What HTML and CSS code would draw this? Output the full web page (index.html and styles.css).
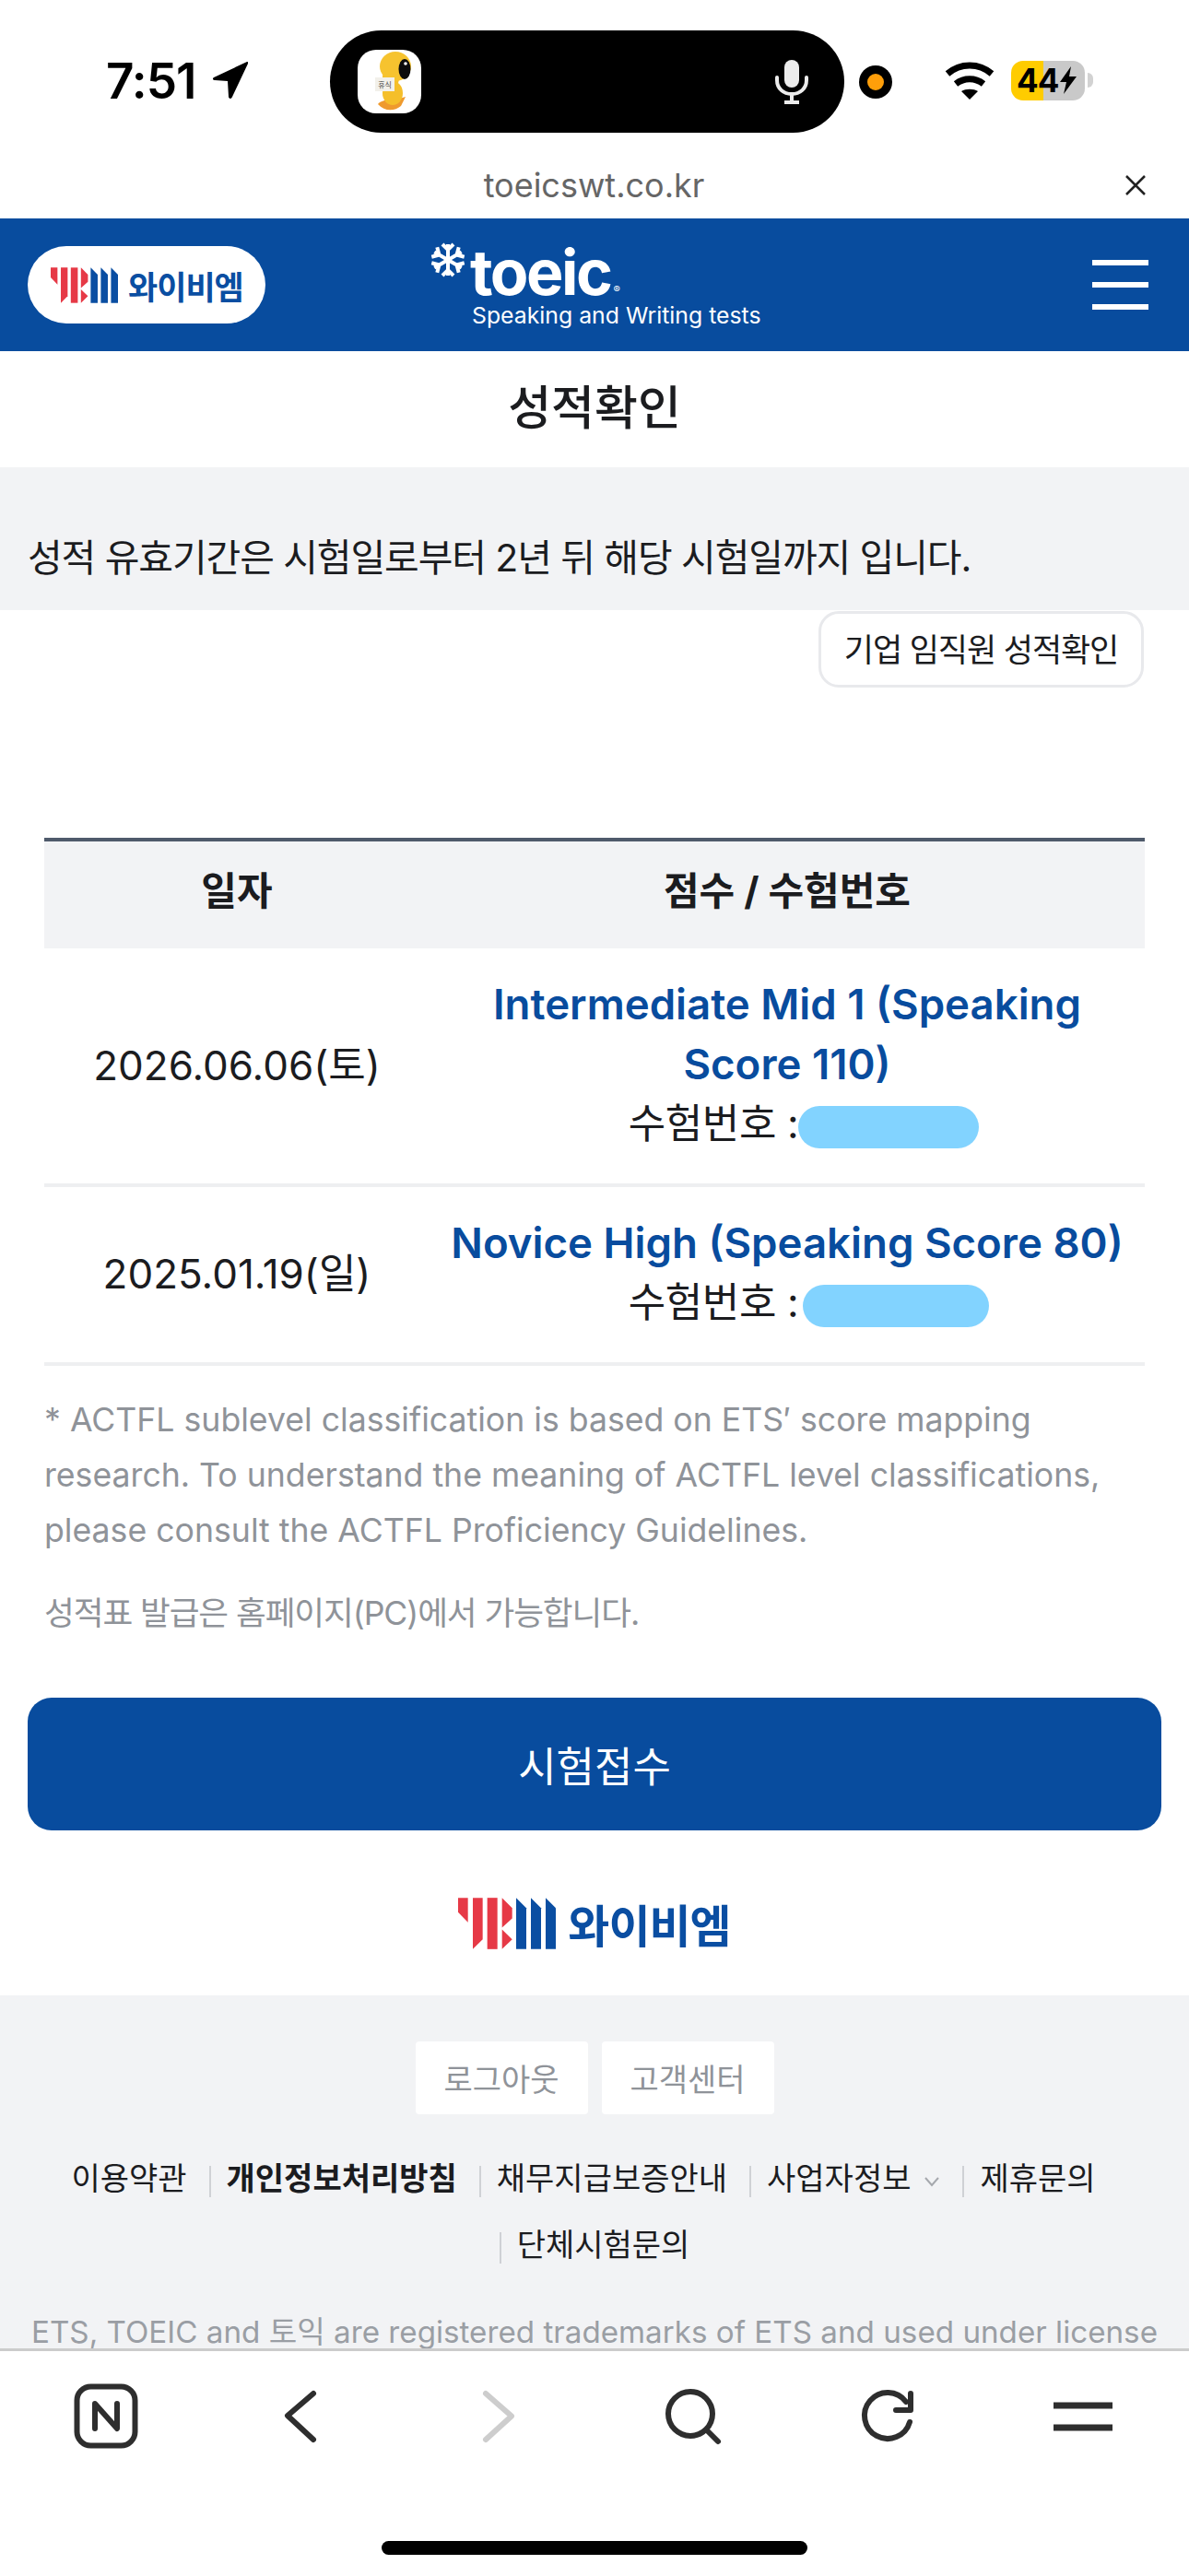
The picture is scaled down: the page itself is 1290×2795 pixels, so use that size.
FILE: index.html
```html
<!DOCTYPE html>
<html lang="ko">
<head>
  <meta charset="UTF-8">
  <title>성적확인</title>
  <link rel="stylesheet" href="styles.css">
</head>
<body>

<svg class="defs" width="0" height="0">
  <symbol id="ybm-mark" viewBox="20 25 318 167">
    <g fill="#e63946">
      <polygon points="20,25 52,25 52,105 20,72"/>
      <polygon points="68,25 100,25 100,160 68,192"/>
      <polygon points="115,25 148,25 148,192 115,192"/>
      <polygon points="163,25 196,58 196,92 163,122"/>
      <polygon points="163,128 196,160 163,192"/>
    </g>
    <g fill="#0a4ea2">
      <polygon points="209,25 242,58 242,192 209,192"/>
      <polygon points="257,25 290,58 290,192 257,192"/>
      <polygon points="305,25 338,58 338,192 305,192"/>
    </g>
  </symbol>
  <symbol id="star-arm" viewBox="0 0 38 38">
    <path d="M19 19V2M13 2l6 6 6-6" fill="none" stroke="#fff" stroke-width="4"/>
  </symbol>
</svg>

<div class="phone">

  <div class="status">
    <div class="time">7:51</div>
    <svg class="loc" width="40" height="42" viewBox="0 0 40 42">
      <path d="M38 1 2 18c-2 1-1 3 1 3l14 1 1 17c0 2 3 3 4 0L39 3c0-2-0-2-1-2z" fill="#000"/>
    </svg>
    <div class="island">
      <svg class="duck" width="69" height="69" viewBox="0 0 69 69">
        <rect width="69" height="69" rx="20" fill="#fff"/>
        <path d="M22 59c3-4 12-6 20-5l10-3-5 10c-7 6-18 6-25-2z" fill="#ef9a2e"/>
        <ellipse cx="38" cy="47" rx="11" ry="13" fill="#f5bf2a"/>
        <ellipse cx="36" cy="30" rx="9" ry="14" fill="#f5bf2a"/>
        <ellipse cx="41" cy="18" rx="17" ry="16" fill="#f6c32f"/>
        <ellipse cx="51" cy="21" rx="6.500" ry="11" fill="#0c0c0c"/>
        <circle cx="52" cy="15" r="1.800" fill="#fff"/>
        <rect x="19" y="30" width="21" height="15" fill="#f2f0ea"/>
        <text class="duck-sign" x="29.500" y="41">휴식</text>
      </svg>
      <svg class="mic" width="38" height="48" viewBox="0 0 38 48">
        <rect x="11" y="0" width="16" height="30" rx="8" fill="#ececec"/>
        <path d="M3 19v3c0 9 7 15 16 15s16-6 16-15v-3" fill="none" stroke="#ececec" stroke-width="4" stroke-linecap="round"/>
        <path d="M19 37v8M11 46h16" stroke="#ececec" stroke-width="4"/>
      </svg>
    </div>
    <div class="rec"><span class="rec-in"></span></div>
    <svg class="wifi" width="60" height="48" viewBox="0 0 60 48">
      <path d="M6 17c14-12 34-12 48 0" fill="none" stroke="#000" stroke-width="7"/>
      <path d="M15 28c9-7 21-7 30 0" fill="none" stroke="#000" stroke-width="7"/>
      <path d="M21 36c5-3 13-3 18 0l-9 9z" fill="#000"/>
    </svg>
    <div class="batt">
      <span class="batt-num">44</span>
      <svg width="20" height="30" viewBox="0 0 20 30"><path d="M13 0 1 17h7l-3 13L19 11h-8z" fill="#000"/></svg>
    </div>
    <div class="batt-cap"></div>
  </div>

  <div class="addr">
    <span class="addr-url">toeicswt.co.kr</span>
    <svg class="addr-x" width="26" height="26" viewBox="0 0 26 26">
      <path d="M3 3l20 20M23 3 3 23" stroke="#222" stroke-width="2.500"/>
    </svg>
  </div>

  <div class="web">
    <header class="top">
      <a class="pill">
        <svg width="73" height="39"><use href="#ybm-mark"/></svg>
        <span class="pill-txt">와이비엠</span>
      </a>
      <div class="brand">
        <div class="brand-top">
          <svg class="star" width="38" height="38" viewBox="0 0 38 38">
            <use href="#star-arm" width="38" height="38"/>
            <use href="#star-arm" width="38" height="38" transform="rotate(60 19 19)"/>
            <use href="#star-arm" width="38" height="38" transform="rotate(120 19 19)"/>
            <use href="#star-arm" width="38" height="38" transform="rotate(180 19 19)"/>
            <use href="#star-arm" width="38" height="38" transform="rotate(240 19 19)"/>
            <use href="#star-arm" width="38" height="38" transform="rotate(300 19 19)"/>
          </svg>
          <span class="brand-name">toeic</span>
          <span class="brand-r">®</span>
        </div>
        <div class="brand-sub">Speaking and Writing tests</div>
      </div>
      <div class="burger"><span></span><span></span><span></span></div>
    </header>

    <h1 class="page-title">성적확인</h1>

    <div class="notice">성적 유효기간은 시험일로부터 2년 뒤 해당 시험일까지 입니다.</div>

    <div class="corp-row"><a class="corp-btn">기업 임직원 성적확인</a></div>

    <table class="scores">
      <thead>
        <tr><th class="col-date">일자</th><th>점수 / 수험번호</th></tr>
      </thead>
      <tbody>
        <tr class="row-a">
          <td class="date">2026.06.06(토)</td>
          <td class="score">
            <strong>Intermediate Mid 1 (Speaking Score 110)</strong>
            <div class="num">수험번호 :<span class="mask mask-a"></span></div>
          </td>
        </tr>
        <tr class="row-b">
          <td class="date">2025.01.19(일)</td>
          <td class="score">
            <strong>Novice High (Speaking Score 80)</strong>
            <div class="num">수험번호 :<span class="mask mask-b"></span></div>
          </td>
        </tr>
      </tbody>
    </table>

    <div class="notes">
      <p>* ACTFL sublevel classification is based on ETS′ score mapping research. To understand the meaning of ACTFL level classifications, please consult the ACTFL Proficiency Guidelines.</p>
      <p class="notes-ko">성적표 발급은 홈페이지(PC)에서 가능합니다.</p>
    </div>

    <a class="apply">시험접수</a>

    <div class="ybm">
      <svg width="106" height="56"><use href="#ybm-mark"/></svg>
      <span class="ybm-txt">와이비엠</span>
    </div>

    <footer class="foot">
      <div class="foot-btns">
        <a class="foot-btn">로그아웃</a>
        <a class="foot-btn">고객센터</a>
      </div>
      <ul class="foot-links">
        <li>이용약관</li>
        <li class="sep"><b>개인정보처리방침</b></li>
        <li class="sep">채무지급보증안내</li>
        <li class="sep">사업자정보<svg class="chev" width="18" height="12" viewBox="0 0 18 12"><path d="M2 2l7 8 7-8" fill="none" stroke="#a5a8ad" stroke-width="2"/></svg></li>
        <li class="sep">제휴문의</li>
        <li class="sep sep-wrap">단체시험문의</li>
      </ul>
      <p class="legal">ETS, TOEIC and 토익 are registered trademarks of ETS and used under license</p>
    </footer>
  </div>

  <nav class="toolbar">
    <div class="tools">
      <svg width="80" height="80" viewBox="0 0 80 80">
        <rect x="8.500" y="7.500" width="63" height="64" rx="15" class="ic"/>
        <path d="M28 53V26l24 27V26" class="ic"/>
      </svg>
      <svg width="80" height="80" viewBox="0 0 80 80"><path d="M53 15 25 39l28 26" class="ic"/></svg>
      <svg width="80" height="80" viewBox="0 0 80 80"><path d="M28 15l28 24.500L28 65" class="ic ic-off"/></svg>
      <svg width="80" height="80" viewBox="0 0 80 80">
        <circle cx="38" cy="37" r="24" class="ic"/>
        <path d="M56 55l12 12" class="ic"/>
      </svg>
      <svg width="80" height="80" viewBox="0 0 80 80">
        <path d="M64 46A25 25 0 1 1 60 24" class="ic"/>
        <path d="M65 15v18H49" class="ic"/>
      </svg>
      <svg width="80" height="80" viewBox="0 0 80 80"><path d="M8 28h64M8 52h64" class="ic ic-bar"/></svg>
    </div>
    <div class="home"></div>
  </nav>

</div>

</body>
</html>
```

FILE: styles.css
```css
* { box-sizing: border-box; }
html, body { margin: 0; padding: 0; background: #fff; }
body {
  font-family: Inter, "Noto Sans CJK KR", sans-serif;
  color: #1b1c1f;
}
a { display: block; }
.defs { display: block; height: 0; }

.phone {
  width: 1290px;
  height: 2795px;
  display: flex;
  flex-direction: column;
  overflow: hidden;
}

/* status bar */
.status {
  height: 177px;
  flex: none;
  display: flex;
  align-items: center;
  padding-left: 115px;
}
.time {
  width: 100px;
  font-size: 53px;
  font-weight: 600;
  letter-spacing: -1px;
  color: #000;
  margin-top: -2px;
}
.loc { margin-left: 15px; margin-top: -4px; }
.island {
  width: 558px;
  height: 111px;
  margin-left: 88px;
  background: #000;
  border-radius: 56px;
  display: flex;
  align-items: center;
  justify-content: space-between;
  padding: 0 38px 0 30px;
}
.duck-sign {
  font-size: 8px;
  text-anchor: middle;
  fill: #444;
}
.rec {
  width: 36px;
  height: 36px;
  margin-left: 16px;
  border-radius: 50%;
  background: #000;
  display: flex;
  align-items: center;
  justify-content: center;
}
.rec-in { width: 18px; height: 18px; border-radius: 50%; background: #ff9f0a; }
.wifi { margin-left: 54px; margin-top: -3px; }
.batt {
  width: 80px;
  height: 43px;
  margin-left: 15px;
  margin-top: -3px;
  border-radius: 13px;
  background: linear-gradient(90deg, #ffcc00 44%, #c9c9c9 44%);
  display: flex;
  align-items: center;
  gap: 1px;
  padding-left: 6px;
}
.batt-num { font-size: 35px; font-weight: 700; color: #000; letter-spacing: -1px; }
.batt-cap {
  width: 6px;
  height: 16px;
  margin-left: 3px;
  margin-top: -3px;
  background: #d2d2d2;
  border-radius: 0 8px 8px 0;
}

/* address */
.addr {
  height: 60px;
  flex: none;
  display: flex;
  align-items: center;
  justify-content: center;
  padding-bottom: 12px;
}
.addr-url { font-size: 36px; color: #666; }
.addr-x { margin-left: 455px; margin-right: -480px; width: 26px; }

/* web page */
.web { flex: 1; min-height: 0; overflow: hidden; }

.top {
  height: 144px;
  background: #084c9e;
  display: flex;
  align-items: center;
  padding: 0 44px 0 30px;
}
.pill {
  width: 258px;
  height: 84px;
  background: #fff;
  border-radius: 42px;
  display: flex;
  align-items: center;
  gap: 11px;
  padding-left: 25px;
}
.pill-txt {
  font-size: 35px;
  font-weight: 700;
  color: #0a4ea2;
  letter-spacing: -1px;
  white-space: nowrap;
}
.brand { margin-left: 179px; color: #fff; align-self: flex-start; }
.brand-top { display: flex; align-items: flex-start; height: 90px; }
.star { margin-top: 26px; }
.brand-name {
  font-size: 68px;
  font-weight: 700;
  letter-spacing: -2.500px;
  line-height: 60px;
  margin-top: 28px;
  margin-left: 5px;
}
.brand-r { font-size: 11px; margin-top: 70px; margin-left: 3px; }
.brand-sub {
  font-size: 24.800px;
  margin-left: 45px;
  line-height: 30px;
  white-space: nowrap;
}
.burger { margin-left: auto; width: 61px; display: flex; flex-direction: column; gap: 18px; }
.burger span { height: 6px; background: #fff; }

.page-title {
  height: 126px;
  margin: 0;
  display: flex;
  align-items: center;
  justify-content: center;
  font-size: 51px;
  font-weight: 500;
  padding-bottom: 10px;
}

.notice {
  height: 155px;
  background: #f2f3f5;
  padding: 68px 30px 0;
  font-size: 41px;
  letter-spacing: -1.100px;
  line-height: 60px;
  white-space: nowrap;
}

.corp-row { display: flex; justify-content: flex-end; padding-right: 49px; margin-top: 1px; }
.corp-btn {
  width: 353px;
  height: 83px;
  border: 3px solid #e8e9ec;
  border-radius: 22px;
  display: flex;
  align-items: center;
  justify-content: center;
  font-size: 35px;
  letter-spacing: -1.100px;
  padding-bottom: 4px;
  white-space: nowrap;
}

/* table */
.scores {
  width: 1194px;
  margin: 163px 0 0 48px;
  border-collapse: collapse;
  table-layout: fixed;
  text-align: center;
}
.scores th {
  height: 118px;
  background: #f2f3f5;
  border-top: 4px solid #4f5a6b;
  font-size: 42px;
  font-weight: 700;
  padding: 0 0 15px;
}
.col-date { width: 418px; }
.scores td {
  border-bottom: 4px solid #eeeff1;
  font-size: 44px;
  padding: 0;
}
.row-a td { height: 257px; }
.row-b td { height: 194px; }
.scores .date { padding-bottom: 8px; }
.scores .score { padding: 0 20px 4px; line-height: 65px; }
.score strong { display: block; font-size: 45.600px; font-weight: 600; color: #084c9e; }
.num { white-space: nowrap; letter-spacing: -0.400px; }
.mask {
  display: inline-block;
  height: 46px;
  background: #82d3ff;
  border-radius: 23px;
  vertical-align: middle;
}
.mask-a { width: 196px; margin-right: -36px; }
.mask-b { width: 202px; margin-left: 5px; margin-right: -47px; }

/* notes */
.notes { padding: 28px 48px 0; color: #8f9399; font-size: 35.650px; line-height: 60px; }
.notes p { margin: 0; }
.notes .notes-ko { margin-top: 30px; letter-spacing: -1.100px; }

.apply {
  height: 144px;
  margin: 62px 30px 0;
  background: #084c9e;
  border-radius: 26px;
  color: #fff;
  font-size: 45px;
  display: flex;
  align-items: center;
  justify-content: center;
}

.ybm {
  height: 179px;
  padding-top: 22px;
  display: flex;
  align-items: center;
  justify-content: center;
  gap: 13px;
}
.ybm-txt { font-size: 49px; font-weight: 700; color: #0a4ea2; letter-spacing: -1px; }

/* footer */
.foot { background: #f2f3f5; padding-top: 50px; height: 400px; text-align: center; }
.foot-btns { display: flex; justify-content: center; gap: 15px; }
.foot-btn {
  width: 187px;
  height: 79px;
  background: #fff;
  border-radius: 4px;
  color: #8f9399;
  font-size: 34px;
  display: flex;
  align-items: center;
  justify-content: center;
}
.foot-links {
  list-style: none;
  margin: 34px 0 0;
  padding: 0 50px;
  display: flex;
  flex-wrap: wrap;
  justify-content: center;
  font-size: 34px;
  line-height: 72px;
}
.foot-links li { white-space: nowrap; margin-right: 24px; }
.sep::before {
  content: "";
  display: inline-block;
  width: 2px;
  height: 34px;
  background: #cfd1d5;
  margin: 0 17px 0 0;
  vertical-align: middle;
}
.foot-links .sep-wrap { margin-left: 24px; }
.chev { margin-left: 14px; vertical-align: middle; }
.legal {
  margin: 36px 0 0;
  font-size: 33.200px;
  line-height: 44px;
  color: #9a9ea4;
  white-space: nowrap;
}

/* app toolbar */
.toolbar { height: 247px; flex: none; background: #fff; border-top: 3px solid #ccc; }
.tools {
  display: grid;
  grid-template-columns: repeat(6, 212px);
  padding: 31px 0 0 9px;
  justify-items: center;
}
.ic {
  fill: none;
  stroke: #2e2e2e;
  stroke-width: 6;
  stroke-linecap: round;
  stroke-linejoin: round;
}
.ic-off { stroke: #cdcdcd; }
.ic-bar { stroke-width: 7; stroke-linecap: butt; }
.home {
  width: 462px;
  height: 15px;
  margin: 95px auto 0;
  background: #000;
  border-radius: 8px;
}
```
